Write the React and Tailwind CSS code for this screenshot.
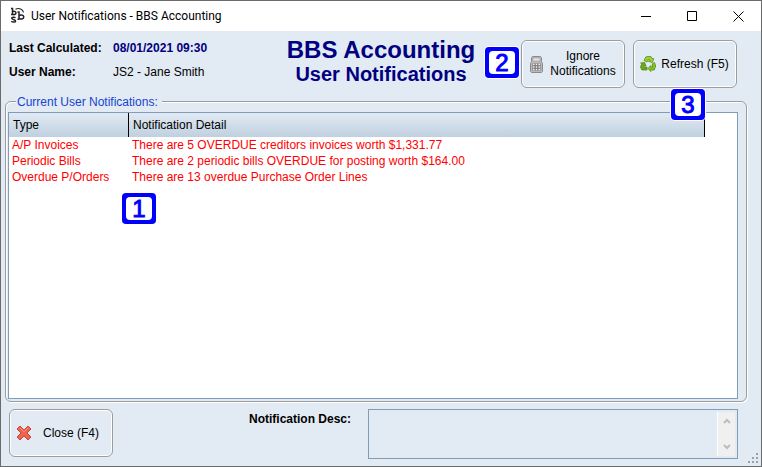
const notifications = [
  { type: "A/P Invoices", detail: "There are 5 OVERDUE creditors invoices worth $1,331.77" },
  { type: "Periodic Bills", detail: "There are 2 periodic bills OVERDUE for posting worth $164.00" },
  { type: "Overdue P/Orders", detail: "There are 13 overdue Purchase Order Lines" },
];

const AppLogo = () => (
  <svg width="18" height="18" viewBox="0 0 18 18" fill="none" stroke="#222" strokeWidth="1.5">
    <path d="M2 1.5h1.500v6M3.500 4.800a2 1.600 0 1 1 0 2.200M2 7.500h2" />
    <path d="M6.500 2.200C10 .6 14 2.200 14.500 5.500" strokeWidth="1.1" />
    <path d="M8.500 5h1.500v7.500M10.200 8.800c1-1.400 4.600-1.200 4.600 1.200s-3.600 2.600-4.600 1.200M8.500 12.200h1.600" />
    <path d="M6.500 10.800c-1-1-3.800-.8-3.800.5 0 1.400 3.900.8 3.900 2.600 0 1.500-3.200 1.500-4.300.3" />
  </svg>
);

const CalculatorIcon = () => (
  <svg width="13" height="17" viewBox="0 0 13 17">
    <path d="M2.500.5h8l1 1v4l1 2v8l-1 1h-10l-1-1v-8l1-2v-4z" fill="#b9b9b9" stroke="#8a8a8a" />
    <path d="M3 2h7v3H3z" fill="#e4e4e4" stroke="#9b9b9b" strokeWidth=".6" />
    <path d="M2.500 7.500h8v7h-8z" fill="#707070" />
    <path d="M3 8.500h7M3 11h7M3 13.500h7" stroke="#eee" strokeWidth="1.3" strokeDasharray="1.6 1.1" />
  </svg>
);

const RecycleIcon = () => (
  <svg width="16" height="16" viewBox="0 0 16 16" strokeLinejoin="round" strokeWidth=".7" stroke="#4c8210">
    <path d="M4 4.500 5.800 1 7 .500h4L12.500 3l1.300-.5-1.500 4-4-1.200 1.500-.8L8.500 3 7 6z" fill="#9bd32c" />
    <path d="m12.300 7.800 2.200-1.300 1.200 3.500-1.500 4H10.800v1.500L8 12.500l2.800-3v1.500h1.700z" fill="#86c41a" />
    <path d="M1.800 14 .4 10.800 1.800 8 .6 7l4-.6L6 10l-1.500-.6-.8 1.600H7v3z" fill="#6ea81c" />
  </svg>
);

const CrossIcon = () => (
  <svg width="16" height="16" viewBox="0 0 16 16">
    <path
      d="M4 1 8 5l4-4 3 3-4 4 4 4-3 3-4-4-4 4-3-3 4-4-4-4z"
      fill="#f2604e"
      stroke="#c4453a"
      strokeLinejoin="round"
    />
    <path d="M4 2.800 8 6.800l4-4" fill="none" stroke="#ff9c8a" />
  </svg>
);

const ToolButton = ({ icon, children }) => (
  <button
    type="button"
    className="flex h-12 w-26 shrink-0 items-center rounded-md border border-[#9c9c9c] bg-[#e2eaf3] pl-1.5 pr-0.5 shadow-[inset_0_0_0_1px_#fff]"
  >
    <span className="flex w-4 shrink-0 justify-center">{icon}</span>
    <span className="flex-1 text-center text-[12px] leading-[15px]">{children}</span>
  </button>
);

const Badge = ({ children, className }) => (
  <span className={`absolute z-10 h-[31px] w-[34px] rounded bg-[#0000ff] p-1 shadow-[0_0_0_1px_#fff] ${className}`}>
    <span className="flex h-full items-center justify-center rounded bg-white text-[24px] leading-6 text-[#0000ff] [-webkit-text-stroke:1px_#0000ff]">
      {children}
    </span>
  </span>
);

const TitleBar = () => (
  <header className="flex h-[30px] items-center justify-between bg-white">
    <div className="flex items-center gap-1 pl-2">
      <AppLogo />
      <span className="font-[Roboto,sans-serif] text-[12px] leading-4">User Notifications - BBS Accounting</span>
    </div>
    <div className="flex h-full">
      <button type="button" aria-label="Minimize" className="flex w-[45px] items-center justify-center">
        <svg width="11" height="11" stroke="#000"><path d="M0 5.500h10" /></svg>
      </button>
      <button type="button" aria-label="Maximize" className="flex w-[46px] items-center justify-center">
        <svg width="11" height="11" fill="none" stroke="#000"><path d="M.5.5h9v9h-9z" /></svg>
      </button>
      <button type="button" aria-label="Close" className="flex w-[46px] items-center justify-center">
        <svg width="11" height="11" stroke="#000"><path d="m.5.5 10 10M10.500.5l-10 10" /></svg>
      </button>
    </div>
  </header>
);

const App = () => {
  return (
    <div className="relative flex min-h-screen flex-col border border-[#6b6b6b] bg-[#e2eaf3] font-['Liberation_Sans',Arial,sans-serif] text-[12px] text-black">
      <TitleBar />

      <section className="grid grid-cols-[1fr_auto_1fr] items-start pt-[5px]">
        <dl className="grid grid-cols-[104px_1fr] pl-2 leading-6">
          <dt className="font-bold">Last Calculated:</dt>
          <dd className="font-bold text-[#000080]">08/01/2021 09:30</dd>
          <dt className="font-bold">User Name:</dt>
          <dd>JS2 - Jane Smith</dd>
        </dl>
        <div className="pt-0.5 text-center font-bold text-[#000080]">
          <h1 className="text-[24px] leading-6">BBS Accounting</h1>
          <h2 className="text-[20px] leading-6">User Notifications</h2>
        </div>
        <div className="flex justify-end gap-2 pr-6 pt-1">
          <div className="relative">
            <ToolButton icon={<CalculatorIcon />}>Ignore Notifications</ToolButton>
            <Badge className="-left-9 top-[7px]">2</Badge>
          </div>
          <div className="relative">
            <ToolButton icon={<RecycleIcon />}>Refresh (F5)</ToolButton>
            <Badge className="left-[38px] top-[49px]">3</Badge>
          </div>
        </div>
      </section>

      <section
        aria-labelledby="current-notifications"
        className="ml-1 mr-3.5 mt-[13px] flex flex-1 flex-col rounded-md border border-[#9c9c9c] pb-0.5 pl-0.5 pr-2 shadow-[1px_1px_0_#fff,inset_1px_1px_0_#fff]"
      >
        <h3
          id="current-notifications"
          className="-mt-2 ml-2 self-start bg-[#e2eaf3] pl-px pr-1 leading-4 text-[#1544d0]"
        >
          Current User Notifications:
        </h3>
        <div className="relative mt-0.5 flex-1 border border-[#7f9db9] bg-white pr-8">
          <table className="w-full table-fixed border-separate border-spacing-0 text-left">
            <thead>
              <tr className="h-6 bg-linear-to-b from-[#e2eaf3] to-[#c0d0e0]">
                <th className="w-30 border-r border-black p-0 pl-1 font-normal">Type</th>
                <th className="border-r border-black p-0 pl-1 font-normal">Notification Detail</th>
              </tr>
            </thead>
            <tbody className="leading-4 text-[#ff0000]">
              {notifications.map((row) => (
                <tr key={row.type}>
                  <td className="p-0 pl-[3px]">{row.type}</td>
                  <td className="p-0 pl-[3px]">{row.detail}</td>
                </tr>
              ))}
            </tbody>
          </table>
          <Badge className="left-[113px] top-20">1</Badge>
        </div>
      </section>

      <footer className="flex items-start py-[7px] pl-2 pr-[23px]">
        <ToolButton icon={<CrossIcon />}>Close (F4)</ToolButton>
        <label htmlFor="notification-desc" className="ml-34 mt-0.5 w-[119px] shrink-0 font-bold leading-4">
          Notification Desc:
        </label>
        <div className="flex h-[50px] flex-1 border border-[#7f9db9] p-0.5">
          <textarea
            id="notification-desc"
            readOnly
            className="flex-1 resize-none overflow-hidden bg-transparent outline-none"
          />
          <div className="flex w-[18px] flex-col items-center justify-between border-l border-white bg-[#f0f0f0] py-1.5">
            <svg width="8" height="6" fill="none" stroke="#bdbdbd" strokeWidth="2"><path d="m1 5 3-3 3 3" /></svg>
            <svg width="8" height="6" fill="none" stroke="#bdbdbd" strokeWidth="2"><path d="m1 1 3 3 3-3" /></svg>
          </div>
        </div>
      </footer>

      <svg className="absolute bottom-0.5 right-0.5" width="11" height="11" fill="#a0a0a0">
        <path d="M8 0h2v2H8zM4 4h2v2H4zM8 4h2v2H8zM0 8h2v2H0zM4 8h2v2H4zM8 8h2v2H8z" />
      </svg>
    </div>
  );
};

export default App;
